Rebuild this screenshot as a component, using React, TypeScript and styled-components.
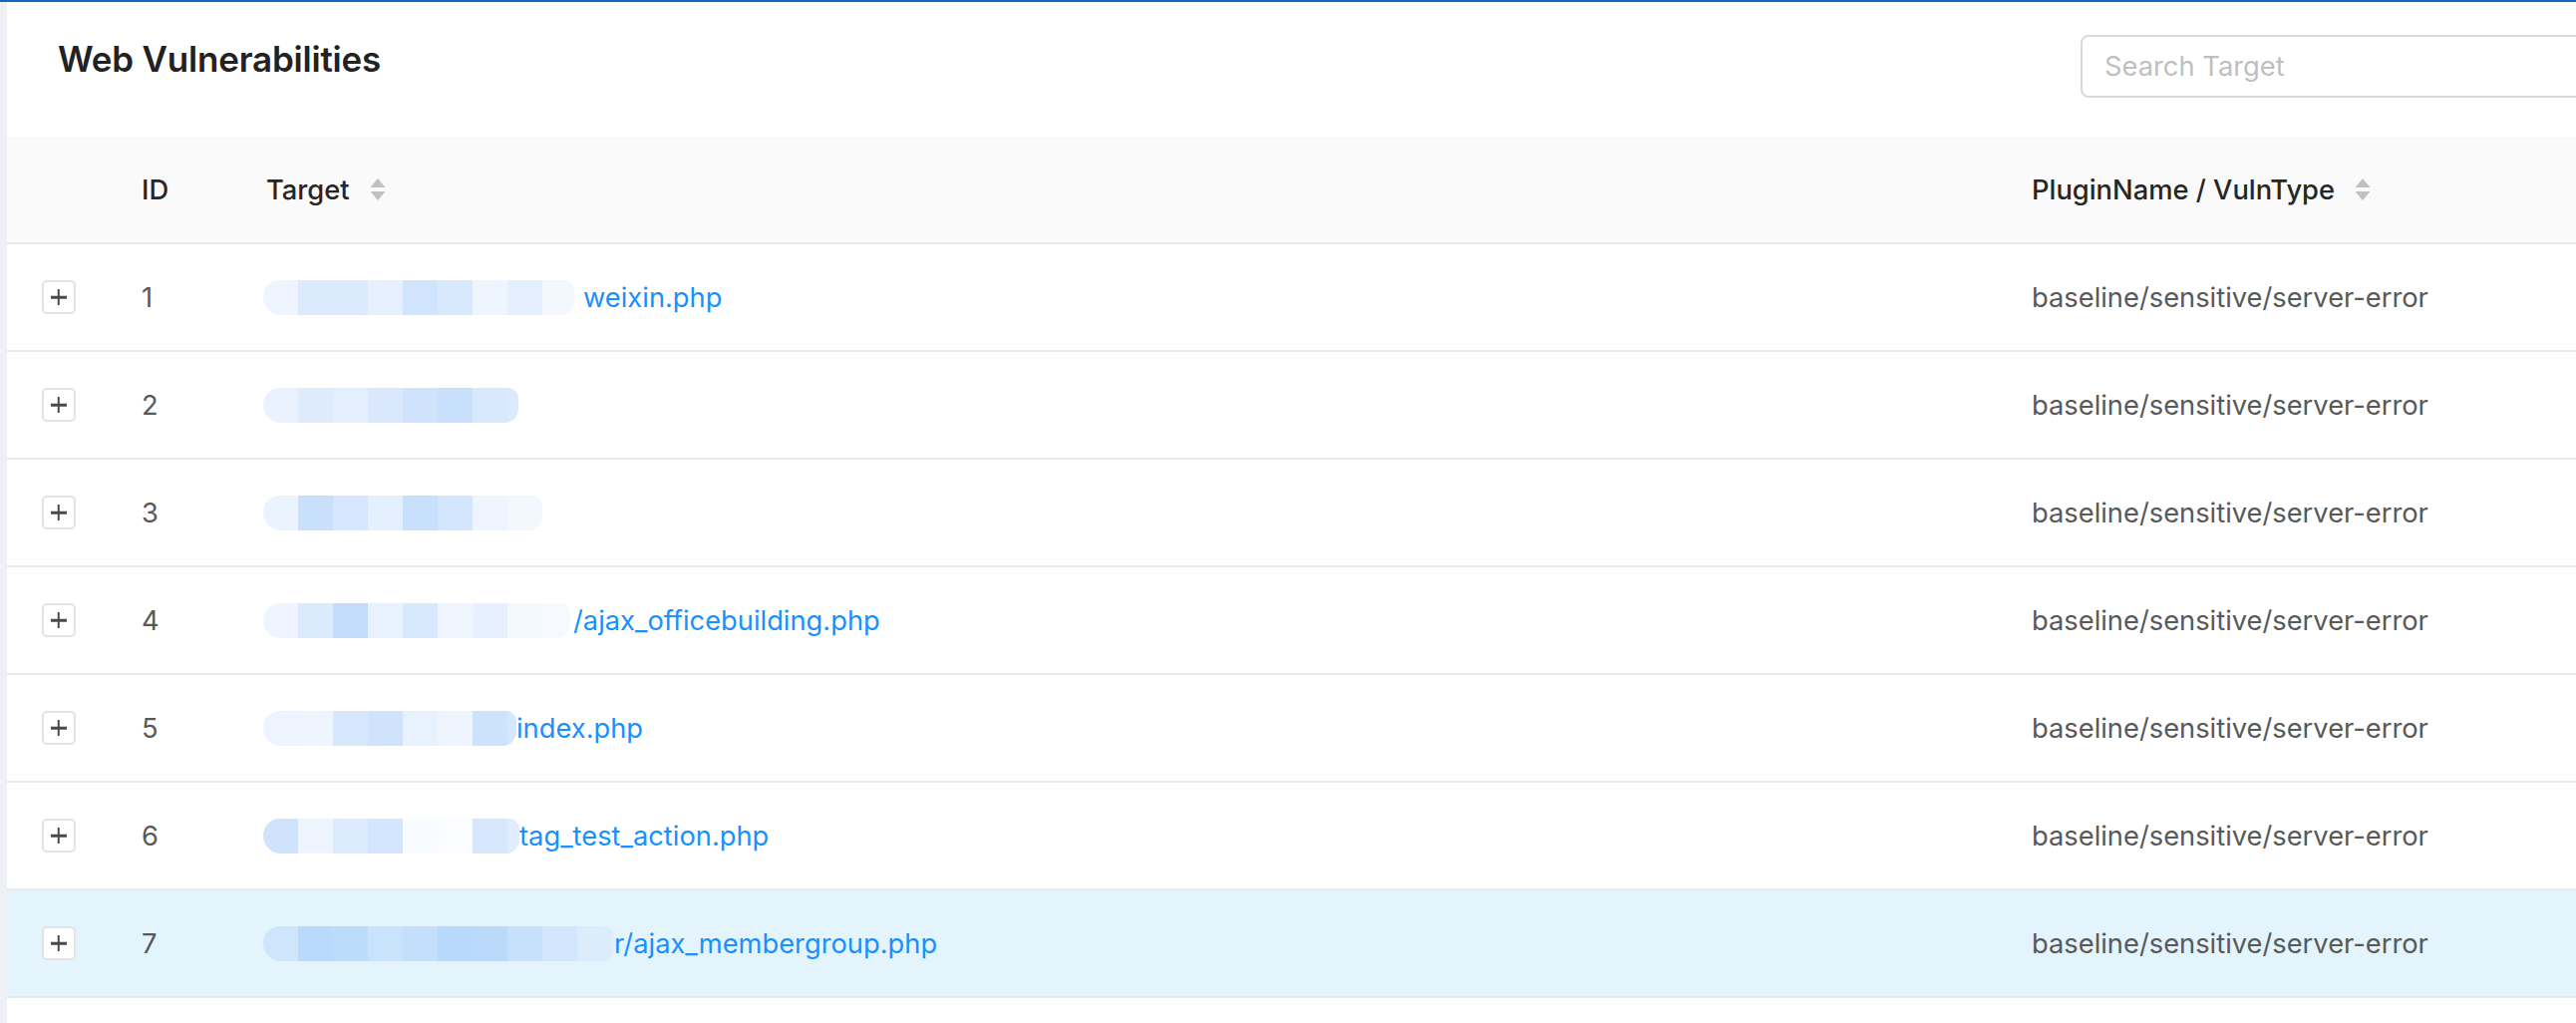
import React from "react";
import styled, { createGlobalStyle } from "styled-components";

const GlobalStyle = createGlobalStyle`
  html, body {
    margin: 0;
    padding: 0;
    background: #ffffff;
    overflow: hidden;
  }
  body {
    font-family: Inter, "Liberation Sans", Arial, sans-serif;
    -webkit-font-smoothing: antialiased;
  }
  * { box-sizing: border-box; }
`;

const Shell = styled.div`
  width: 2800px;
  min-height: 1026px;
  display: flex;
  flex-direction: column;
`;

const TopBar = styled.div`
  height: 2px;
  background: #1565c0;
`;

const Body = styled.div`
  flex: 1;
  display: flex;
`;

const SideStrip = styled.div`
  width: 7px;
  flex: none;
  background: #eef0f4;
`;

const Card = styled.section`
  flex: 1;
  display: flex;
  flex-direction: column;
  background: #ffffff;
`;

const Toolbar = styled.header`
  height: 135px;
  display: flex;
  align-items: flex-start;
  justify-content: space-between;
  padding-left: 51px;
`;

const Title = styled.h1`
  margin: 32px 0 0;
  font-size: 35px;
  line-height: 50px;
  font-weight: 600;
  color: #222222;
  letter-spacing: -0.2px;
`;

const SearchInput = styled.input`
  margin: 33px 73px 0 0;
  width: 640px;
  height: 63px;
  border: 2px solid #d9d9d9;
  border-radius: 8px;
  padding: 0 22px;
  font-family: inherit;
  font-size: 27.3px;
  color: #595959;
  outline: none;
  &::placeholder {
    color: #bfbfbf;
  }
`;

const Table = styled.div`
  display: flex;
  flex-direction: column;
`;

const Grid = styled.div<{ $head?: boolean; $selected?: boolean }>`
  display: grid;
  grid-template-columns: 103px 125px 1771px 1fr;
  height: 108px;
  border-bottom: 2px solid #e9e9e9;
  background: ${(p) => (p.$head ? "#fafafa" : p.$selected ? "#e3f4fd" : "#ffffff")};
`;

const Cell = styled.div<{ $center?: boolean }>`
  display: flex;
  align-items: center;
  justify-content: ${(p) => (p.$center ? "center" : "flex-start")};
  padding: ${(p) => (p.$center ? "0" : "0 32px")};
  font-size: 27.3px;
  color: #595959;
  white-space: nowrap;
  overflow: hidden;
`;

const HeadLabel = styled.span`
  font-size: 27.3px;
  font-weight: 500;
  color: #262626;
`;

const SortIcon = styled.svg`
  margin-left: 20px;
  width: 16px;
  height: 24px;
  flex: none;
`;

const ExpandButton = styled.button`
  position: relative;
  width: 34px;
  height: 34px;
  padding: 0;
  border: 2px solid #e3e3e3;
  border-radius: 5px;
  background: #ffffff;
  cursor: pointer;
  &::before,
  &::after {
    content: "";
    position: absolute;
    left: 50%;
    top: 50%;
    background: #4a4a4a;
    transform: translate(-50%, -50%);
  }
  &::before {
    width: 16px;
    height: 2.5px;
  }
  &::after {
    width: 2.5px;
    height: 16px;
  }
`;

const TargetLink = styled.a`
  display: flex;
  align-items: center;
  color: #1890ff;
  text-decoration: none;
  font-size: 27.3px;
`;

const Redacted = styled.span<{ $w: number; $tones: string[]; $gap: number }>`
  display: inline-block;
  width: ${(p) => p.$w}px;
  height: 35px;
  margin-left: -3px;
  margin-right: ${(p) => p.$gap}px;
  border-radius: 17px 10px 14px 18px;
  background: ${(p) =>
    "linear-gradient(90deg, " +
    p.$tones
      .map((c, i) => `${c} ${i * 35}px ${(i + 1) * 35}px`)
      .join(", ") +
    ")"};
`;

type Row = {
  id: number;
  blur: number;
  gap: number;
  tones: string[];
  path: string;
  selected?: boolean;
};

const rows: Row[] = [
  {
    id: 1,
    blur: 312,
    gap: 9,
    tones: ["#eef5ff", "#dbeafd", "#dbeafd", "#e6f0fe", "#d0e4fd", "#d9e9fd", "#eef5ff", "#e3effe", "#f3f8ff"],
    path: "weixin.php",
  },
  {
    id: 2,
    blur: 256,
    gap: 0,
    tones: ["#e9f2fe", "#deebfd", "#e3effe", "#d9e8fd", "#d0e3fd", "#c9e0fc", "#d9e9fd", "#dbeafd"],
    path: "",
  },
  {
    id: 3,
    blur: 280,
    gap: 0,
    tones: ["#eaf3fe", "#c8e0fc", "#d6e7fd", "#e5f0fe", "#c9e0fc", "#d3e6fd", "#eef5ff", "#f3f8ff"],
    path: "",
  },
  {
    id: 4,
    blur: 308,
    gap: 3,
    tones: ["#eef5ff", "#dbeafd", "#c3dcfc", "#e8f2fe", "#d9e9fd", "#eff6ff", "#e6f0fe", "#f4f9ff", "#f6faff"],
    path: "/ajax_officebuilding.php",
  },
  {
    id: 5,
    blur: 254,
    gap: 0,
    tones: ["#edf4ff", "#eef5ff", "#d5e6fd", "#cfe3fd", "#e8f1fe", "#eef5ff", "#cde2fd", "#d6e7fd"],
    path: "index.php",
  },
  {
    id: 6,
    blur: 257,
    gap: 0,
    tones: ["#cfe3fd", "#eef5ff", "#dcebfd", "#d3e6fd", "#f8fbff", "#fafcff", "#d6e7fd", "#e0edfe"],
    path: "tag_test_action.php",
  },
  {
    id: 7,
    blur: 352,
    gap: 0,
    tones: ["#cfe5fc", "#b9dafc", "#bcdcfc", "#c9e3fd", "#c3dffc", "#b7d9fb", "#bad9fb", "#c7e1fd", "#d2e7fd", "#dcecfd", "#e3effd"],
    path: "r/ajax_membergroup.php",
    selected: true,
  },
];

const Sorter = () => (
  <SortIcon viewBox="0 0 16 24" aria-hidden="true">
    <path d="M8 1 L15.5 10 L0.5 10 Z" fill="#c1c1c1" />
    <path d="M0.5 14 L15.5 14 L8 23 Z" fill="#c1c1c1" />
  </SortIcon>
);

export default function App() {
  return (
    <>
      <GlobalStyle />
      <Shell>
        <TopBar />
        <Body>
          <SideStrip />
          <Card>
            <Toolbar>
              <Title>Web Vulnerabilities</Title>
              <SearchInput placeholder="Search Target" />
            </Toolbar>
            <Table>
              <Grid $head>
                <Cell $center />
                <Cell>
                  <HeadLabel>ID</HeadLabel>
                </Cell>
                <Cell>
                  <HeadLabel>Target</HeadLabel>
                  <Sorter />
                </Cell>
                <Cell>
                  <HeadLabel>PluginName / VulnType</HeadLabel>
                  <Sorter />
                </Cell>
              </Grid>
              {rows.map((r) => (
                <Grid key={r.id} $selected={r.selected}>
                  <Cell $center>
                    <ExpandButton aria-label="Expand row" />
                  </Cell>
                  <Cell>{r.id}</Cell>
                  <Cell>
                    <TargetLink href="#">
                      <Redacted $w={r.blur} $tones={r.tones} $gap={r.gap} />
                      {r.path}
                    </TargetLink>
                  </Cell>
                  <Cell>baseline/sensitive/server-error</Cell>
                </Grid>
              ))}
            </Table>
          </Card>
        </Body>
      </Shell>
    </>
  );
}
